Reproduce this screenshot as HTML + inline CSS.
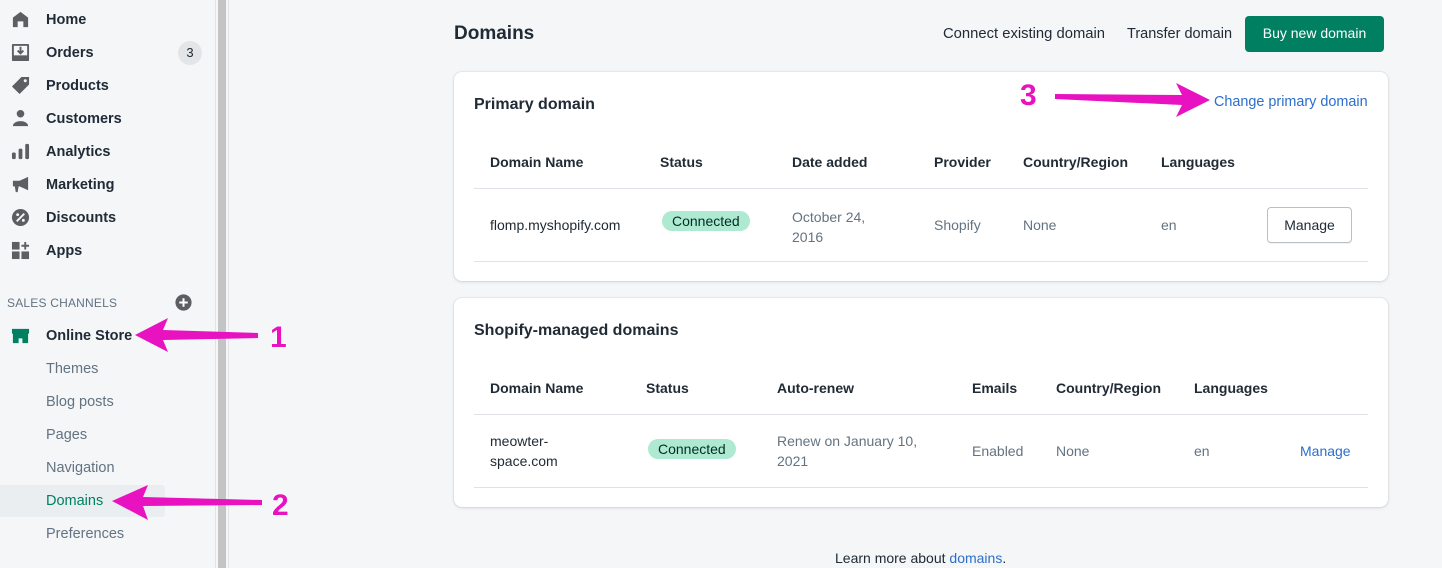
<!DOCTYPE html>
<html><head><style>
*{box-sizing:border-box;margin:0;padding:0}
body{width:1442px;height:568px;overflow:hidden;background:#f4f6f8;font-family:"Liberation Sans",sans-serif;color:#212b36;font-size:14px;position:relative}
.side{position:absolute;left:0;top:0;width:216px;height:568px;background:#f4f6f8;border-right:1px solid #e1e3e5}
.bar{position:absolute;left:218px;top:0;width:8px;height:568px;background:#c4c4c4}
.bar2{position:absolute;left:228px;top:0;width:1px;height:568px;background:#e4e5e7}
.nav{position:absolute;left:46px;font-size:14.5px;font-weight:bold;color:#212b36}
.sub{position:absolute;left:46px;font-size:14.5px;color:#637381}
.ic{position:absolute;left:11px;width:19px;height:19px}
.card{position:absolute;left:454px;width:934px;background:#fff;border-radius:8px;box-shadow:0 0 0 1px rgba(63,63,68,.05),0 1px 3px rgba(63,63,68,.15)}
.t{position:absolute;font-size:14px}
.h{font-weight:bold;color:#212b36}
.g{color:#637381}
.pill{position:absolute;background:#aee9d1;color:#002e25;border-radius:10px;padding:2px 10px;font-size:14px}
.line{position:absolute;left:20px;width:894px;height:1px;background:#dfe3e8}
</style></head><body>
<div class="side"></div><div class="bar"></div><div class="bar2"></div>
<svg class="ic" style="top:10px" viewBox="0 0 20 20"><path d="M2 8 L10 2 L18 8 V18 H13 V12 H7 V18 H2Z" fill="#5c5f62"/></svg>
<div class="nav" style="top:12px">Home</div>
<svg class="ic" style="top:43px" viewBox="0 0 20 20"><rect x="1" y="1" width="18" height="18" rx="1" fill="#5c5f62"/><rect x="3" y="3" width="14" height="10" fill="#f4f6f8"/><path d="M10 4 V11 M7 8 L10 11 L13 8" stroke="#5c5f62" stroke-width="2" fill="none"/></svg>
<div class="nav" style="top:45px">Orders</div>
<div style="position:absolute;left:178px;top:41px;width:24px;height:24px;border-radius:12px;background:#e4e5e7;font-size:13px;text-align:center;line-height:24px;color:#212b36">3</div>
<svg class="ic" style="top:76px" viewBox="0 0 20 20"><path d="M11 1 H19 V9 L9 19 L1 11Z" fill="#5c5f62"/><circle cx="15" cy="5" r="1.6" fill="#f4f6f8"/></svg>
<div class="nav" style="top:78px">Products</div>
<svg class="ic" style="top:109px" viewBox="0 0 20 20"><circle cx="10" cy="5" r="4" fill="#5c5f62"/><path d="M2 18 C2 11 18 11 18 18Z" fill="#5c5f62"/></svg>
<div class="nav" style="top:111px">Customers</div>
<svg class="ic" style="top:142px" viewBox="0 0 20 20"><rect x="1" y="11" width="4" height="7" rx="1.5" fill="#5c5f62"/><rect x="8" y="7" width="4" height="11" rx="1.5" fill="#5c5f62"/><rect x="15" y="2" width="4" height="16" rx="1.5" fill="#5c5f62"/></svg>
<div class="nav" style="top:144px">Analytics</div>
<svg class="ic" style="top:175px" viewBox="0 0 20 20"><path d="M18 2 V16 L9 12 H2 V6 H9Z M4 12 H8 L7 18 H5Z" fill="#5c5f62"/></svg>
<div class="nav" style="top:177px">Marketing</div>
<svg class="ic" style="top:208px" viewBox="0 0 20 20"><circle cx="10" cy="10" r="9" fill="#5c5f62"/><path d="M6 14 L14 6" stroke="#f4f6f8" stroke-width="2"/><circle cx="7" cy="7" r="1.5" fill="#f4f6f8"/><circle cx="13" cy="13" r="1.5" fill="#f4f6f8"/></svg>
<div class="nav" style="top:210px">Discounts</div>
<svg class="ic" style="top:241px" viewBox="0 0 20 20"><rect x="1" y="1" width="8" height="8" fill="#5c5f62"/><rect x="1" y="11" width="8" height="8" fill="#5c5f62"/><rect x="11" y="11" width="8" height="8" fill="#5c5f62"/><path d="M15 1 V9 M11 5 H19" stroke="#5c5f62" stroke-width="2"/></svg>
<div class="nav" style="top:243px">Apps</div>
<div style="position:absolute;left:7px;top:296px;font-size:12px;color:#637381;letter-spacing:.2px">SALES CHANNELS</div>
<svg style="position:absolute;left:175px;top:294px" width="17" height="17" viewBox="0 0 20 20"><circle cx="10" cy="10" r="9.5" fill="#5c5f62"/><path d="M10 5 V15 M5 10 H15" stroke="#fff" stroke-width="2.4"/></svg>
<svg class="ic" style="top:326px" viewBox="0 0 20 20"><path d="M1 3 H19 V8 H1Z M2 8 H18 V18 H12 V13 H8 V18 H2Z" fill="#008060"/></svg>
<div class="nav" style="top:328px">Online Store</div>
<div class="sub" style="top:361px">Themes</div>
<div class="sub" style="top:394px">Blog posts</div>
<div class="sub" style="top:427px">Pages</div>
<div class="sub" style="top:460px">Navigation</div>
<div style="position:absolute;left:0;top:485px;width:165px;height:32px;background:#ebeef0;border-radius:0 3px 3px 0"></div>
<div class="sub" style="top:493px;color:#008060">Domains</div>
<div class="sub" style="top:526px">Preferences</div>

<div style="position:absolute;left:454px;top:23px;font-size:19px;font-weight:bold;color:#212b36">Domains</div>
<div class="t" style="left:943px;top:26px;font-size:14.8px">Connect existing domain</div>
<div class="t" style="left:1127px;top:26px;font-size:14.5px">Transfer domain</div>
<div style="position:absolute;left:1245px;top:16px;width:139px;height:36px;background:#008060;border-radius:4px;color:#fff;font-size:14px;text-align:center;line-height:35px">Buy new domain</div>

<div class="card" style="top:72px;height:209px">
<div class="t h" style="left:20px;top:24px;font-size:16px">Primary domain</div>
<div class="t" style="left:760px;top:22px;color:#2c6ecb;font-size:14.4px">Change primary domain</div>
<div class="t h" style="left:36px;top:82px">Domain Name</div>
<div class="t h" style="left:206px;top:82px">Status</div>
<div class="t h" style="left:338px;top:82px">Date added</div>
<div class="t h" style="left:480px;top:82px">Provider</div>
<div class="t h" style="left:569px;top:82px">Country/Region</div>
<div class="t h" style="left:707px;top:82px">Languages</div>
<div class="line" style="top:116px"></div>
<div class="t" style="left:36px;top:145px">flomp.myshopify.com</div>
<div class="pill" style="left:208px;top:139px">Connected</div>
<div class="t g" style="left:338px;top:135px;line-height:20px">October 24,<br>2016</div>
<div class="t g" style="left:480px;top:145px">Shopify</div>
<div class="t g" style="left:569px;top:145px">None</div>
<div class="t g" style="left:707px;top:145px">en</div>
<div style="position:absolute;left:813px;top:135px;width:85px;height:36px;border:1px solid #babfc3;border-radius:4px;box-shadow:0 1px 0 rgba(0,0,0,.05);text-align:center;line-height:34px;font-size:14px">Manage</div>
<div class="line" style="top:189px"></div>
</div>

<div class="card" style="top:298px;height:209px">
<div class="t h" style="left:20px;top:24px;font-size:16px">Shopify-managed domains</div>
<div class="t h" style="left:36px;top:82px">Domain Name</div>
<div class="t h" style="left:192px;top:82px">Status</div>
<div class="t h" style="left:323px;top:82px">Auto-renew</div>
<div class="t h" style="left:518px;top:82px">Emails</div>
<div class="t h" style="left:602px;top:82px">Country/Region</div>
<div class="t h" style="left:740px;top:82px">Languages</div>
<div class="line" style="top:116px"></div>
<div class="t" style="left:36px;top:133px;line-height:20px">meowter-<br>space.com</div>
<div class="pill" style="left:194px;top:141px">Connected</div>
<div class="t g" style="left:323px;top:133px;line-height:20px">Renew on January 10,<br>2021</div>
<div class="t g" style="left:518px;top:145px">Enabled</div>
<div class="t g" style="left:602px;top:145px">None</div>
<div class="t g" style="left:740px;top:145px">en</div>
<div class="t" style="left:846px;top:145px;color:#2c6ecb">Manage</div>
<div class="line" style="top:189px"></div>
</div>
<div class="t" style="left:835px;top:550px">Learn more about <span style="color:#2c6ecb">domains</span>.</div>

<svg style="position:absolute;left:0;top:0" width="1442" height="568">
<g fill="#e812c0">
<path d="M135 335 L168 318 L163 330 L258 333 L258 338 L163 340 L168 352Z"/>
<path d="M112 501 L148 485 L143 497 L262 500 L262 505 L143 506 L148 520Z"/>
<path d="M1210 100 L1176 83 L1182 95 L1055 94 L1055 99 L1182 105 L1176 117Z"/>
</g>
<g font-family="Liberation Sans" font-weight="bold" font-size="30" fill="#e812c0" stroke="#fff" stroke-width="1.5" paint-order="stroke">
<text x="270" y="347">1</text><text x="272" y="515">2</text><text x="1020" y="105">3</text>
</g>
</svg>
</body></html>
